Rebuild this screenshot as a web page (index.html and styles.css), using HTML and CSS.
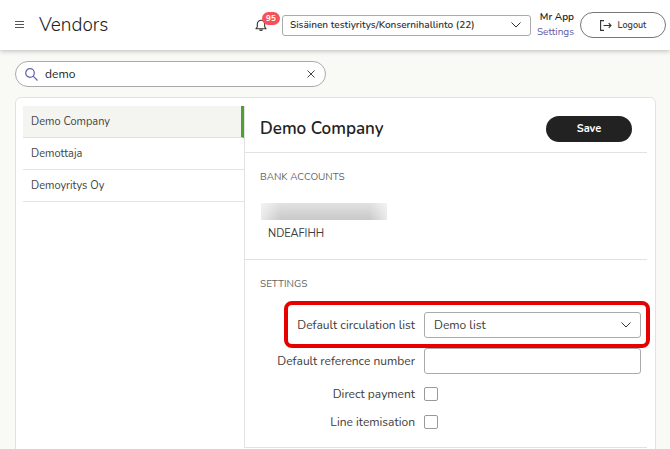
FILE: index.html
```html
<!DOCTYPE html>
<html lang="en">
<head>
    <meta charset="UTF-8">
    <meta name="viewport" content="width=device-width, initial-scale=1.0">
    <title>Vendors</title>
    <link rel="stylesheet" href="styles.css">
</head>
<body>
    <header class="topbar">
        <button type="button" class="menu-button" aria-label="Menu">
            <svg width="9" height="8" viewBox="0 0 9 8" stroke="#555" stroke-width="1"><path d="M0 .5h9M0 3.5h9M0 6.5h9"/></svg>
        </button>
        <h1>Vendors</h1>

        <button type="button" class="bell" aria-label="Notifications">
            <svg width="12" height="13" viewBox="0 0 12 13" fill="none" stroke="#333" stroke-width="1.1" stroke-linejoin="round"><path d="M1 9.7h10L9.7 8V5C9.7 2.800 8 1.300 6 1.300S2.300 2.800 2.300 5v3z"/><path d="M4.600 10.500c.3 1.200 2.500 1.200 2.800 0"/></svg>
            <span class="badge">95</span>
        </button>

        <div class="select company-select">
            <select aria-label="Company">
                <option>Sisäinen testiyritys/Konsernihallinto (22)</option>
            </select>
            <svg class="chevron" width="10" height="6" viewBox="0 0 10 6" fill="none" stroke="#333"><path d="M.5.5 5 5 9.500.5"/></svg>
        </div>

        <div class="user">
            <span class="user-name">Mr App</span>
            <a href="#settings">Settings</a>
        </div>

        <button type="button" class="logout">
            <svg width="12" height="11" viewBox="0 0 12 11" fill="none" stroke="#333" stroke-width="1.1"><path d="M4 .6H.6v9.800H4M3.500 5.500h7.500M8.700 3.200 11 5.500 8.700 7.800"/></svg>
            Logout
        </button>
    </header>

    <main>
        <div class="search">
            <svg width="13" height="13" viewBox="0 0 13 13" fill="none" stroke="#6262ad" stroke-width="1.200"><circle cx="5" cy="5" r="4.300"/><path d="m8.200 8.200 4.300 4.300"/></svg>
            <input type="text" value="demo" aria-label="Search vendors">
            <button type="button" aria-label="Clear search">
                <svg width="8" height="8" viewBox="0 0 8 8" stroke="#444"><path d="m.5.5 7 7M7.500.5l-7 7"/></svg>
            </button>
        </div>

        <div class="panel">
            <nav class="vendor-list">
                <a href="#demo-company" class="active">Demo Company</a>
                <a href="#demottaja">Demottaja</a>
                <a href="#demoyritys">Demoyritys Oy</a>
            </nav>

            <form class="details">
                <div class="details-header">
                    <h2>Demo Company</h2>
                    <button type="button" class="save">Save</button>
                </div>

                <section class="accounts">
                    <h3>Bank accounts</h3>
                    <div class="hidden-number"></div>
                    <p>NDEAFIHH</p>
                </section>

                <section class="settings">
                    <h3>Settings</h3>
                    <div class="field highlighted">
                        <label for="circulation">Default circulation list</label>
                        <div class="select">
                            <select id="circulation">
                                <option>Demo list</option>
                            </select>
                            <svg class="chevron" width="10" height="6" viewBox="0 0 10 6" fill="none" stroke="#333"><path d="M.5.5 5 5 9.500.5"/></svg>
                        </div>
                    </div>
                    <div class="field">
                        <label for="reference">Default reference number</label>
                        <input type="text" id="reference">
                    </div>
                    <div class="field check">
                        <label for="direct">Direct payment</label>
                        <input type="checkbox" id="direct">
                    </div>
                    <div class="field check">
                        <label for="lines">Line itemisation</label>
                        <input type="checkbox" id="lines">
                    </div>
                </section>
            </form>
        </div>
    </main>
</body>
</html>
```
FILE: styles.css
```css
* {
    box-sizing: border-box;
}
body {
    display: flex;
    flex-direction: column;
    height: 100vh;
    margin: 0;
    overflow: hidden;
    font-family: Nunito, "Open Sans", sans-serif;
    font-size: 12px;
    line-height: 16px;
    color: #3c3c3c;
    background-color: #f9faf6;
}
h1, h2, h3, p {
    margin: 0;
}
button, input, select {
    font: inherit;
    color: inherit;
}
button {
    padding: 0;
    border: none;
    background: none;
    cursor: pointer;
}
svg {
    display: block;
    flex: none;
}

/* Top bar */
.topbar {
    display: flex;
    align-items: center;
    flex: none;
    height: 50px;
    padding: 0 4px 0 15px;
    background-color: white;
    box-shadow: 0 1px 5px rgba(0, 0, 0, 0.25);
}
.topbar h1 {
    margin-left: 15px;
    font-size: 19px;
    font-weight: 300;
    line-height: 24px;
    color: #222;
}
.bell {
    position: relative;
    margin-left: auto;
    margin-right: 15px;
}
.badge {
    position: absolute;
    top: -7px;
    left: 7px;
    width: 18px;
    border-radius: 7px;
    font-size: 8px;
    font-weight: 700;
    line-height: 13px;
    text-align: center;
    color: white;
    background-color: #f8505a;
}
.select {
    position: relative;
}
.select select {
    display: block;
    width: 100%;
    padding: 0 28px 0 9px;
    border: 1px solid #aaa;
    border-radius: 3px;
    background-color: white;
    appearance: none;
}
.chevron {
    position: absolute;
    top: 50%;
    right: 10px;
    margin-top: -3px;
    pointer-events: none;
}
.company-select {
    flex: 0 1 249px;
}
.company-select select {
    height: 21px;
    padding-left: 7px;
    font-size: 10px;
    font-weight: 600;
    color: #333;
}
.user {
    display: flex;
    flex-direction: column;
    margin-left: 6px;
    font-size: 10px;
    line-height: 15px;
    text-align: right;
}
.user-name {
    font-weight: 600;
    color: #222;
}
.user a {
    color: #5a5aa5;
    text-decoration: none;
}
.logout {
    display: flex;
    align-items: center;
    justify-content: center;
    gap: 6px;
    width: 86px;
    height: 26px;
    margin-left: 6px;
    border: 1px solid #777;
    border-radius: 13px;
    font-size: 9px;
    font-weight: 600;
}

main {
    display: flex;
    flex-direction: column;
    flex: 1;
    padding: 11px 14px 0 15px;
}

/* Search */
.search {
    display: flex;
    align-items: center;
    flex: none;
    width: 311px;
    height: 26px;
    padding: 0 10px 0 9px;
    border: 1px solid #aaa;
    border-radius: 13px;
    background-color: white;
}
.search input {
    flex: 1;
    min-width: 0;
    padding: 0 7px;
    border: none;
    outline: none;
    background: none;
    color: #222;
}

/* Panel */
.panel {
    display: flex;
    flex: 1 0 auto;
    margin-top: 10px;
    padding: 8px 8px 8px 7px;
    border: 1px solid #e2e2e2;
    border-radius: 6px;
    background-color: white;
}
.vendor-list {
    flex: none;
    width: 222px;
    border-right: 1px solid #e2e2e2;
}
.vendor-list a {
    display: block;
    padding: 8px 8px 7px;
    border-bottom: 1px solid #e2e2e2;
    font-size: 11px;
    color: #444;
    text-decoration: none;
}
.vendor-list .active {
    border-right: 3px solid #4f9f35;
    background-color: #f4f5f1;
}

/* Vendor details */
.details {
    flex: 1;
}
.details-header, .details section {
    padding-left: 15px;
    border-bottom: 1px solid #e2e2e2;
}
.details-header {
    display: flex;
    align-items: center;
    justify-content: space-between;
    height: 47px;
    padding-right: 15px;
}
h2 {
    font-size: 17px;
    font-weight: 600;
    line-height: 24px;
    color: #222;
}
.save {
    width: 86px;
    height: 26px;
    border-radius: 13px;
    font-size: 11px;
    font-weight: 700;
    color: white;
    background-color: #222;
}
h3 {
    font-size: 10px;
    font-weight: 400;
    text-transform: uppercase;
    color: #666;
}
.accounts {
    padding-top: 16px;
    padding-bottom: 17px;
}
.accounts p {
    margin-top: 6px;
    padding-left: 8px;
    font-size: 11px;
}
.hidden-number {
    width: 126px;
    height: 17px;
    margin: 18px 0 0 1px;
    background: linear-gradient(90deg, rgba(255, 255, 255, 0.6), transparent 16%, transparent 86%, rgba(255, 255, 255, 0.6)), linear-gradient(#e2e2e2, #c8c8c8);
}

/* Settings form */
.settings {
    padding-top: 16px;
    padding-bottom: 17px;
}
.settings h3 {
    margin-bottom: 20px;
}
.field {
    display: grid;
    grid-template-columns: 155px 1fr;
    align-items: center;
    gap: 9px;
    margin-bottom: 10px;
    padding-right: 6px;
}
.field label {
    text-align: right;
    white-space: nowrap;
}
.field select, .field input[type="text"] {
    width: 100%;
    height: 26px;
    border: 1px solid #aaa;
    border-radius: 3px;
}
.field input[type="checkbox"] {
    width: 14px;
    height: 14px;
    margin: 0;
    border: 1px solid #999;
    border-radius: 2px;
    background-color: white;
    appearance: none;
}
.check {
    margin: 12px 0 0;
}
.highlighted {
    position: relative;
}
.highlighted::after {
    content: "";
    position: absolute;
    inset: -11px -3px -10px 24px;
    border: 4px solid #e60000;
    border-radius: 8px;
    pointer-events: none;
}
```
